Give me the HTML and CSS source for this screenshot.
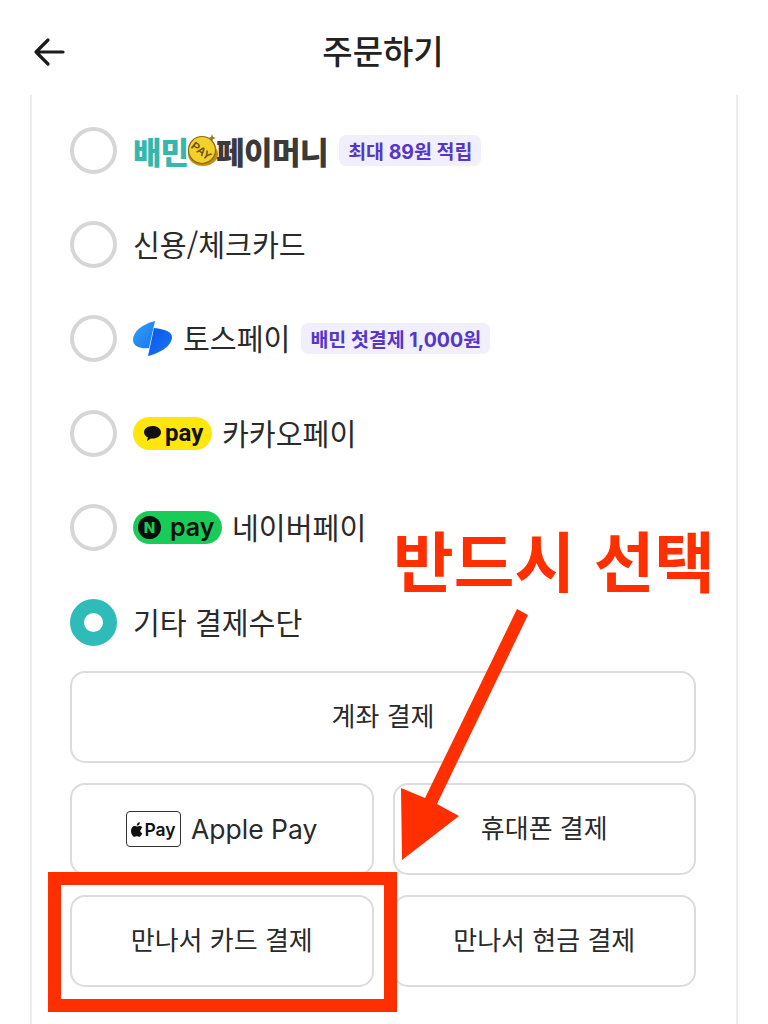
FILE: index.html
```html
<!DOCTYPE html>
<html lang="ko">
<head>
<meta charset="utf-8">
<title>주문하기</title>
<link rel="stylesheet" href="styles.css">
</head>
<body>
<div class="page">
  <header class="header">
    <svg class="back" viewBox="0 0 32 32" width="32" height="32"><path d="M30 16H3M15 4 3 16l12 12" fill="none" stroke="#1c1c1c" stroke-width="3.2" stroke-linecap="round" stroke-linejoin="round"/></svg>
    <h1 class="title">주문하기</h1>
  </header>
  <main class="panel">
    <div class="row">
      <span class="radio"></span>
      <span class="baemin"><span class="teal">배민</span><svg class="coin" viewBox="0 0 32 34" width="32" height="34"><path d="M25 1l1 3 3 1-3 1-1 3-1-3-3-1 3-1Z" fill="#8a7a30"/><ellipse cx="16" cy="21" rx="15" ry="12" fill="#c08f12"/><circle cx="15" cy="17" r="13.500" fill="#f4d02c" stroke="#8a6a10" stroke-width="1.200"/><text x="15" y="22" text-anchor="middle" class="cointext" transform="rotate(38 15 17)">PAY</text></svg><span class="dark">페이머니</span></span>
      <span class="badge">최대 89원 적립</span>
    </div>
    <div class="row">
      <span class="radio"></span>
      <span class="label">신용/체크카드</span>
    </div>
    <div class="row">
      <span class="radio"></span>
      <svg class="toss" viewBox="0 0 39 35" width="39" height="35"><defs><linearGradient id="tl" x1="0" y1="0" x2="1" y2="1"><stop offset="0" stop-color="#38a0f5"/><stop offset="1" stop-color="#1478ee"/></linearGradient><linearGradient id="tr" x1="0" y1="0" x2="1" y2="1"><stop offset="0" stop-color="#0a55ea"/><stop offset="1" stop-color="#1a78f2"/></linearGradient></defs><path d="M22 0C10 3 0 10 0 19c0 7 9 9 16 8Z" fill="url(#tl)"/><path d="M21 7c11 1 18 4 18 9 0 9-12 16-24 19Z" fill="url(#tr)"/></svg>
      <span class="label">토스페이</span>
      <span class="badge">배민 첫결제 1,000원</span>
    </div>
    <div class="row">
      <span class="radio"></span>
      <span class="pill kakao"><svg viewBox="0 0 20 18" width="19" height="17"><path d="M10 1C5 1 1 4 1 7.600c0 2.400 1.600 4.400 4 5.500L4.300 17l4-2.800c.6.100 1.100.100 1.700.100 5 0 9-3 9-6.700S15 1 10 1Z" fill="#111"/></svg>pay</span>
      <span class="label">카카오페이</span>
    </div>
    <div class="row">
      <span class="radio"></span>
      <span class="pill naver"><span class="ncircle">N</span>pay</span>
      <span class="label">네이버페이</span>
    </div>
    <div class="row">
      <span class="radio checked"></span>
      <span class="label">기타 결제수단</span>
    </div>
    <div class="buttons">
      <div class="btn wide">계좌 결제</div>
      <div class="btn applebtn"><span class="applemark"><svg viewBox="0 0 14 17" width="12" height="15"><path d="M11.600 9c0-2 1.700-3 1.800-3.100-1-1.400-2.500-1.600-3-1.600-1.300-.1-2.500.8-3.200.8-.6 0-1.700-.8-2.800-.8C3 4.300 1.700 5.100 1 6.400-.5 9-.4 12.900 2.200 16c.6.800 1.300 1 2 1 .8 0 1.300-.6 2.700-.6s1.700.6 2.700.6c1.100 0 1.700-.9 2.400-1.800.6-.9 1.100-2.200 1.200-2.300-.1 0-2.600-1.100-2.600-3.900ZM9.400 3c.6-.7 1-1.700.9-3-.9 0-2 .6-2.600 1.300-.6.600-1.100 1.700-.9 2.700 1 .1 2-.4 2.600-1Z" fill="#111"/></svg>Pay</span>Apple Pay</div>
      <div class="btn">휴대폰 결제</div>
      <div class="btn">만나서 카드 결제</div>
      <div class="btn">만나서 현금 결제</div>
    </div>
  </main>
  <div class="note">반드시 선택</div>
  <svg class="arrow" viewBox="391 600 140 265" width="140" height="265"><path d="M517 609 528 615 437 804 459 816 402 860 401 788 425 798Z" fill="#ff2f00"/></svg>
  <div class="redbox"></div>
</div>
</body>
</html>
```
FILE: styles.css
```css
* { box-sizing: border-box; }
html, body { margin: 0; padding: 0; background: #fff; }
body { font-family: "Noto Sans CJK KR", "Noto Sans", sans-serif; color: #222; }
.page { position: relative; width: 768px; height: 1024px; overflow: hidden; }
.header { position: relative; height: 95px; display: flex; align-items: center; justify-content: center; }
.back { position: absolute; left: 33px; top: 36px; }
.title { margin: 0; font-size: 33px; font-weight: 500; line-height: 1; color: #222; position: relative; left: -1px; top: 3px; }
.panel { margin: 0 30px; height: 929px; border-left: 2px solid #ececec; border-right: 2px solid #ececec; padding: 8px 40px 0 38px; }
.row { height: 94.400px; display: flex; align-items: center; gap: 16px; }
.radio { flex: none; width: 47px; height: 47px; border-radius: 50%; border: 4px solid #d6d6d6; background: #fff; }
.radio.checked { border: 14.500px solid #2fbcb8; }
.label { font-size: 29.200px; line-height: 1; color: #2a2a2a; padding-bottom: 2px; }
.baemin { display: flex; align-items: center; font-size: 31px; font-weight: 900; line-height: 1; }
.teal { color: #36b7ad; letter-spacing: -1px; }
.dark { color: #3a3a3a; margin-left: -1px; letter-spacing: -.5px; }
.coin { margin: 0 -2px 0 -1px; }
.cointext { font-size: 11.500px; font-weight: 700; fill: #6a5410; font-family: "Liberation Sans", sans-serif; }
.badge { height: 31px; display: flex; align-items: center; padding: 0 9px; margin-left: -5px; background: #f0effb; border-radius: 7px; color: #5636c8; font-family: "Inter", "Noto Sans CJK KR", sans-serif; font-size: 19.500px; font-weight: 700; white-space: nowrap; }
.toss { margin-right: -5px; }
.pill { height: 33px; display: flex; align-items: center; border-radius: 17px; font-weight: 700; color: #111; line-height: 1; margin-right: -6px; }
.kakao { width: 79px; background: #ffe60d; padding-left: 10px; gap: 3px; font-family: "Roboto", sans-serif; font-size: 24px; }
.naver { width: 89px; background: #19cc57; padding-left: 5px; gap: 9px; font-family: "Inter", sans-serif; font-size: 25px; font-weight: 600; }
.ncircle { width: 23px; height: 23px; border-radius: 50%; background: #0c0c0c; color: #19cc57; display: flex; align-items: center; justify-content: center; font-size: 15px; font-weight: 800; }
.buttons { display: grid; grid-template-columns: 1fr 1fr; gap: 20px 19px; margin-top: 2px; }
.btn { height: 92px; padding-bottom: 6px; border: 2px solid #dcdcdc; border-radius: 15px; display: flex; align-items: center; justify-content: center; font-size: 26px; color: #2a2a2a; background: #fff; }
.btn.wide { grid-column: 1 / 3; }
.applebtn { font-family: "Inter", "Noto Sans", sans-serif; gap: 10px; padding-bottom: 0; font-size: 26.500px; }
.applemark { width: 55px; height: 36px; border: 1.500px solid #333; border-radius: 4px; display: flex; align-items: center; justify-content: center; gap: 1px; font-size: 17.500px; font-weight: 600; color: #111; }
.note { position: absolute; left: 393px; top: 519px; font-size: 66px; font-weight: 700; line-height: 1.200; color: #ff2f00; white-space: nowrap; }
.arrow { position: absolute; left: 391px; top: 600px; }
.redbox { position: absolute; left: 48px; top: 872px; width: 349px; height: 140px; border: 13px solid #ff2f00; }
```
